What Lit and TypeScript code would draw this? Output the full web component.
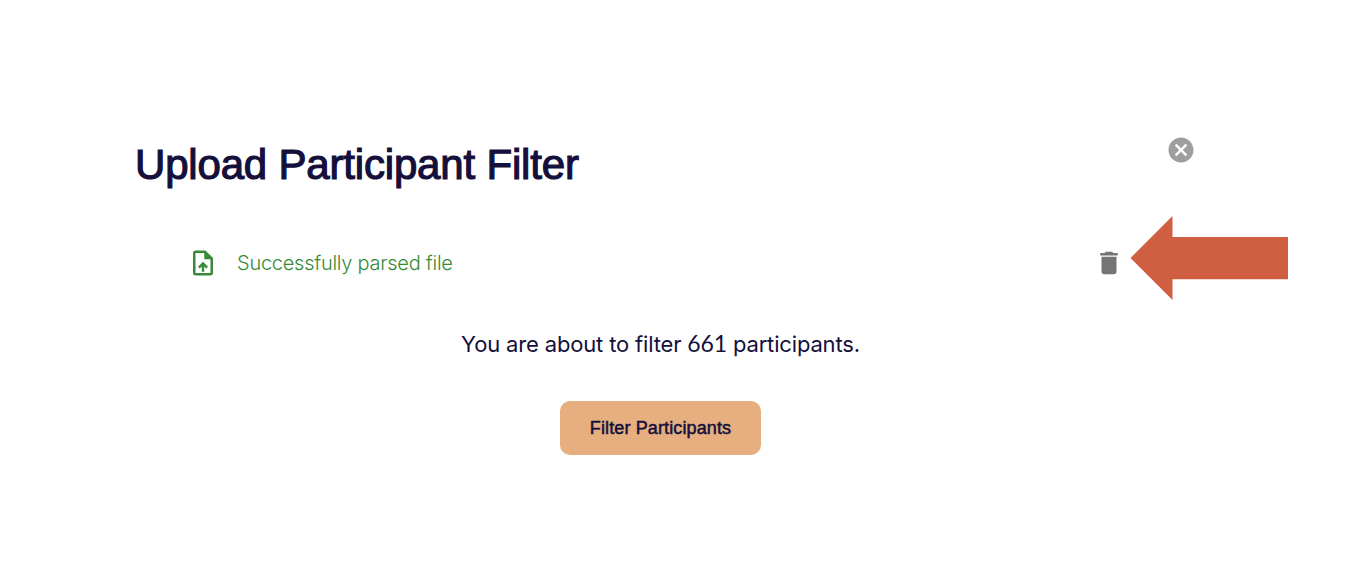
import { html, css, svg, LitElement } from 'lit'
import { customElement, property } from 'lit/decorators.js'

const icons: Record<string, string> = {
  upload:
    'M14 2H6c-1.1 0-1.99.9-1.99 2L4 20c0 1.1.89 2 1.99 2H18c1.1 0 2-.9 2-2V8l-6-6zm4 18H6V4h7v5h5v11zM8 15.01l1.41 1.41L11 14.84V19h2v-4.16l1.59 1.59L16 15.01 12.01 11 8 15.01z',
  trash: 'M6 19c0 1.1.9 2 2 2h8c1.1 0 2-.9 2-2V7H6v12zM19 4h-3.5l-1-1h-5l-1 1H5v2h14V4z',
  cancel:
    'M12 2C6.47 2 2 6.47 2 12s4.47 10 10 10 10-4.47 10-10S17.53 2 12 2zm5 13.59L15.59 17 12 13.41 8.41 17 7 15.59 10.59 12 7 8.41 8.41 7 12 10.59 15.59 7 17 8.41 13.41 12 17 15.59z',
}

@customElement('app-icon')
export class AppIcon extends LitElement {
  @property() name = ''

  static styles = css`
    :host {
      display: block;
      flex: none;
      width: 30px;
      height: 30px;
    }

    svg {
      display: block;
      width: 100%;
      height: 100%;
      fill: currentColor;
    }
  `

  render() {
    return html`<svg viewBox="0 0 24 24">${svg`<path d=${icons[this.name]} />`}</svg>`
  }
}

@customElement('app-root')
export class AppRoot extends LitElement {
  @property({ type: Number }) count = 661

  static styles = css`
    :host {
      display: block;
      position: relative;
      box-sizing: border-box;
      height: 572px;
      padding: 135px 164px 0 135px;
      overflow: hidden;
      background: #ffffff;
      color: #140f3b;
      font-family: Inter, 'Liberation Sans', sans-serif;
    }

    .header {
      display: flex;
      justify-content: space-between;
      align-items: flex-start;
      height: 113px;
    }

    h1 {
      margin: 0;
      padding-top: 4px;
      font-family: 'Liberation Sans', sans-serif;
      font-size: 42px;
      line-height: 51px;
      font-weight: 400;
      letter-spacing: -0.18px;
      white-space: nowrap;
      -webkit-text-stroke: 1.2px currentColor;
    }

    .close {
      color: #9e9e9e;
    }

    .file {
      display: flex;
      align-items: center;
      height: 30px;
      padding: 0 72px 0 53px;
    }

    .status {
      flex: 1;
      display: flex;
      align-items: center;
      gap: 19px;
      color: #388a38;
      font-size: 20px;
      line-height: 30px;
      font-weight: 350;
      letter-spacing: -0.25px;
    }

    .trash {
      color: #757575;
    }

    .body {
      display: flex;
      flex-direction: column;
      align-items: center;
      width: 1051px;
      padding-top: 49px;
    }

    .message {
      margin: 0 0 41px;
      font-size: 22px;
      line-height: 32px;
      letter-spacing: -0.16px;
      white-space: nowrap;
    }

    .count {
      font-family: Lato, sans-serif;
      font-size: 23px;
    }

    button {
      width: 201px;
      height: 54px;
      padding: 0;
      border: 0;
      border-radius: 10px;
      background: #e7af7f;
      color: #140f3b;
      font-family: 'Liberation Sans', sans-serif;
      font-size: 18px;
      letter-spacing: 0.12px;
      white-space: nowrap;
      -webkit-text-stroke: 0.5px currentColor;
    }

    .arrow {
      position: absolute;
      left: 1130px;
      top: 216px;
      width: 158px;
      height: 84px;
      fill: #d05f41;
    }
  `

  render() {
    return html`
      <div class="header">
        <h1>Upload Participant Filter</h1>
        <app-icon class="close" name="cancel"></app-icon>
      </div>

      <div class="file">
        <div class="status">
          <app-icon name="upload"></app-icon>
          <span>Successfully parsed file</span>
        </div>
        <app-icon class="trash" name="trash"></app-icon>
      </div>

      <div class="body">
        <p class="message">You are about to filter <span class="count">${this.count}</span> participants.</p>
        <button>Filter Participants</button>
      </div>

      <svg class="arrow" viewBox="0 0 158 84">
        <path d="M0.5 42L42.5 0V21H158V63.3H42.5V84Z" />
      </svg>
    `
  }
}
